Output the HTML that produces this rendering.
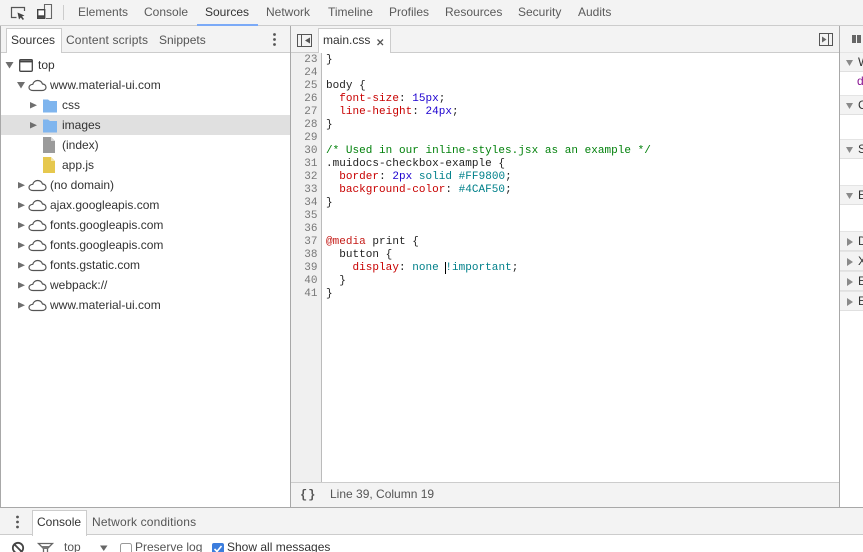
<!DOCTYPE html>
<html><head><meta charset="utf-8">
<style>
html,body{margin:0;padding:0;background:#fff}
#r{position:relative;width:863px;height:552px;overflow:hidden;background:#fff;font:12px/14px "Liberation Sans",sans-serif;color:#333;filter:blur(.3px)}
.a{position:absolute}
.t{position:absolute;white-space:nowrap;line-height:14px;color:#333}
.g{color:#555}
.tb{position:absolute;white-space:nowrap;line-height:14px;top:5px;color:#5a5a5a}
.n{position:absolute;left:291px;width:26.500px;text-align:right;font:11px/13px "Liberation Mono",monospace;color:#777}
.c{position:absolute;left:326px;white-space:pre;font:11px/13px "Liberation Mono",monospace;letter-spacing:.03px;color:#222}
.p{color:#c80000}.v{color:#1c00cf}.k{color:#00808a}.m{color:#00800a}.at{color:#c41a16}
svg{position:absolute;overflow:visible}
.hd{position:absolute;left:840px;width:23px;background:#f3f3f3;border-top:1px solid #e4e4e4;border-bottom:1px solid #e0e0e0}
.hd b{position:absolute;left:18px;top:0;font:normal 12px/19px "Liberation Sans",sans-serif;color:#333}
</style></head><body><div id="r">

<!-- top toolbar -->
<div class="a" style="left:0;top:0;width:863px;height:25px;background:#f3f3f3;border-bottom:1px solid #ccc"></div>
<svg style="left:0;top:0" width="70" height="25" fill="none">
<path d="M16.500 17.500H11.500V7.500H24.500V11" stroke="#555" stroke-width="1.200"/>
<path d="M17.500 12.500L24.500 15.500L22 16.500L24 19L22.800 20L20.800 17.500L19 19.500Z" fill="#444"/>
<path d="M44.500 9V4.500H51.500V18.500H46" stroke="#666" stroke-width="1.100"/>
<rect x="37.700" y="9.700" width="7" height="8.600" fill="#fff" stroke="#444" stroke-width="1.400"/>
<path d="M37.500 16.500H44.500" stroke="#444" stroke-width="2.400"/>
</svg>
<div class="a" style="left:63px;top:5px;width:1px;height:15px;background:#ccc"></div>
<div class="tb" style="left:78px">Elements</div>
<div class="tb" style="left:144px">Console</div>
<div class="tb" style="left:205px;color:#333">Sources</div>
<div class="tb" style="left:266px">Network</div>
<div class="tb" style="left:328px">Timeline</div>
<div class="tb" style="left:389px">Profiles</div>
<div class="tb" style="left:445px">Resources</div>
<div class="tb" style="left:518px">Security</div>
<div class="tb" style="left:578px">Audits</div>
<div class="a" style="left:197px;top:24px;width:61px;height:2px;background:#7baaf7"></div>

<!-- left pane -->
<div class="a" style="left:0;top:26px;width:1px;height:481px;background:#a8a8a8"></div>
<div class="a" style="left:1px;top:26px;width:289px;height:26px;background:#f3f3f3;border-bottom:1px solid #ccc"></div>
<div class="a" style="left:6px;top:28px;width:54px;height:24px;background:#fff;border:1px solid #ccc;border-bottom:none"></div>
<div class="t" style="left:11px;top:33px">Sources</div>
<div class="t g" style="left:66px;top:33px;letter-spacing:.14px">Content scripts</div>
<div class="t g" style="left:159px;top:33px">Snippets</div>
<svg style="left:270px;top:32px" width="8" height="16" fill="#555"><circle cx="4.500" cy="2.500" r="1.400"/><circle cx="4.500" cy="7.500" r="1.400"/><circle cx="4.500" cy="12.500" r="1.400"/></svg>
<div class="a" style="left:290px;top:26px;width:1px;height:481px;background:#a8a8a8"></div>

<div class="a" style="left:1px;top:115px;width:289px;height:20px;background:#e0e0e0"></div>

<svg style="left:0;top:53px" width="70" height="265">
<defs>
<path id="cl" d="M5.500 14.500H14.500C17 14.500 18.500 13 18.500 11.200C18.500 9.400 17 8 15 8C14.200 5.700 12.300 4.500 10.200 4.500C7.800 4.500 5.800 6.100 5.300 8.300C3.300 8.500 1.500 9.600 1.500 11.500C1.500 13.300 3.200 14.500 5.500 14.500Z" fill="none" stroke="#555" stroke-width="1.200"/>
<path id="tr" d="M0 0L7 3.250L0 6.500Z" fill="#6e6e6e"/>
<path id="td" d="M0 0H8L4 6.500Z" fill="#6e6e6e"/>
<path id="fo" d="M0 0H5L7 1.500H14V13H0Z" fill="#7fb5ee"/>
</defs>
<use href="#td" x="5.500" y="9"/>
<rect x="19.700" y="6.700" width="12.600" height="11.600" fill="none" stroke="#444" stroke-width="1.300" rx="1"/>
<path d="M19.500 8.500H32.500" stroke="#444" stroke-width="1.800"/>
<use href="#td" x="17" y="29"/>
<use href="#cl" x="27.500" y="23"/>
<use href="#tr" x="30" y="49"/>
<use href="#fo" x="43" y="46.500"/>
<use href="#tr" x="30" y="69"/>
<use href="#fo" x="43" y="66.500"/>
<path d="M43 84H51L55 88V100H43Z" fill="#9b9b9b"/><path d="M51 84V88H55Z" fill="#d6d6d6"/>
<path d="M43 104H51L55 108V120H43Z" fill="#e6c84e"/><path d="M51 104V108H55Z" fill="#f4e6a8"/>
<use href="#tr" x="18" y="129"/><use href="#cl" x="27.500" y="123"/>
<use href="#tr" x="18" y="149"/><use href="#cl" x="27.500" y="143"/>
<use href="#tr" x="18" y="169"/><use href="#cl" x="27.500" y="163"/>
<use href="#tr" x="18" y="189"/><use href="#cl" x="27.500" y="183"/>
<use href="#tr" x="18" y="209"/><use href="#cl" x="27.500" y="203"/>
<use href="#tr" x="18" y="229"/><use href="#cl" x="27.500" y="223"/>
<use href="#tr" x="18" y="249"/><use href="#cl" x="27.500" y="243"/>
</svg>

<div class="t" style="left:38px;top:58px">top</div>
<div class="t" style="left:50px;top:78px">www.material-ui.com</div>
<div class="t" style="left:62px;top:98px">css</div>
<div class="t" style="left:62px;top:118px">images</div>
<div class="t" style="left:62px;top:138px">(index)</div>
<div class="t" style="left:62px;top:158px">app.js</div>
<div class="t" style="left:50px;top:178px">(no domain)</div>
<div class="t" style="left:50px;top:198px">ajax.googleapis.com</div>
<div class="t" style="left:50px;top:218px">fonts.googleapis.com</div>
<div class="t" style="left:50px;top:238px">fonts.googleapis.com</div>
<div class="t" style="left:50px;top:258px">fonts.gstatic.com</div>
<div class="t" style="left:50px;top:278px">webpack://</div>
<div class="t" style="left:50px;top:298px">www.material-ui.com</div>

<!-- editor tabs -->
<div class="a" style="left:291px;top:26px;width:548px;height:26px;background:#f3f3f3;border-bottom:1px solid #ccc"></div>
<svg style="left:296px;top:33px" width="20" height="15" fill="none">
<rect x="1.500" y="1.500" width="14" height="12" stroke="#555"/><path d="M5.500 1.500V13.500" stroke="#555"/><path d="M14 4.500L9 7.500L14 10.500Z" fill="#555"/>
</svg>
<div class="a" style="left:318px;top:28px;width:71px;height:24px;background:#fff;border:1px solid #ccc;border-bottom:none"></div>
<div class="t" style="left:323px;top:33px">main.css</div>
<svg style="left:376px;top:38px" width="9" height="9"><path d="M1.500 1.500L7 7M7 1.500L1.500 7" stroke="#555" stroke-width="1.300"/></svg>
<svg style="left:818px;top:32px" width="16" height="15" fill="none">
<rect x="1.500" y="1.500" width="13" height="12" stroke="#555"/><path d="M10.500 1.500V13.500" stroke="#555"/><path d="M4 4.500L8.500 7.500L4 10.500Z" fill="#666"/>
</svg>

<!-- gutter -->
<div class="a" style="left:291px;top:53px;width:30px;height:430px;background:#f0f0f0;border-right:1px solid #bbb"></div>
<div id="nums">
<div class="n" style="top:54px">23</div><div class="n" style="top:67px">24</div><div class="n" style="top:80px">25</div><div class="n" style="top:93px">26</div><div class="n" style="top:106px">27</div><div class="n" style="top:119px">28</div><div class="n" style="top:132px">29</div><div class="n" style="top:145px">30</div><div class="n" style="top:158px">31</div><div class="n" style="top:171px">32</div><div class="n" style="top:184px">33</div><div class="n" style="top:197px">34</div><div class="n" style="top:210px">35</div><div class="n" style="top:223px">36</div><div class="n" style="top:236px">37</div><div class="n" style="top:249px">38</div><div class="n" style="top:262px">39</div><div class="n" style="top:275px">40</div><div class="n" style="top:288px">41</div>
</div>

<div class="c" style="top:54px">}</div>
<div class="c" style="top:80px">body {</div>
<div class="c" style="top:93px">  <span class="p">font-size</span>: <span class="v">15px</span>;</div>
<div class="c" style="top:106px">  <span class="p">line-height</span>: <span class="v">24px</span>;</div>
<div class="c" style="top:119px">}</div>
<div class="c m" style="top:145px;color:#00800a">/* Used in our inline-styles.jsx as an example */</div>
<div class="c" style="top:158px">.muidocs-checkbox-example {</div>
<div class="c" style="top:171px">  <span class="p">border</span>: <span class="v">2px</span> <span class="k">solid</span> <span class="k">#FF9800</span>;</div>
<div class="c" style="top:184px">  <span class="p">background-color</span>: <span class="k">#4CAF50</span>;</div>
<div class="c" style="top:197px">}</div>
<div class="c" style="top:236px"><span class="at">@media</span> print {</div>
<div class="c" style="top:249px">  button {</div>
<div class="c" style="top:262px">    <span class="p">display</span>: <span class="k">none</span> <span class="k">!important</span>;</div>
<div class="c" style="top:275px">  }</div>
<div class="c" style="top:288px">}</div>
<div class="a" style="left:445px;top:262px;width:1px;height:12px;background:#000"></div>

<!-- status bar -->
<div class="a" style="left:291px;top:482px;width:548px;height:24px;background:#f3f3f3;border-top:1px solid #ccc"></div>
<div class="t" style="left:300px;top:488px;font:bold 12px/14px 'Liberation Mono',monospace;letter-spacing:1px;color:#555">{}</div>
<div class="t g" style="left:330px;top:487px">Line 39, Column 19</div>

<!-- right sidebar -->
<div class="a" style="left:839px;top:26px;width:1px;height:481px;background:#a8a8a8"></div>
<div class="a" style="left:840px;top:26px;width:23px;height:26px;background:#f3f3f3;border-bottom:1px solid #ccc"></div>
<div class="a" style="left:852px;top:35px;width:3.500px;height:8px;background:#666"></div>
<div class="a" style="left:857px;top:35px;width:3.500px;height:8px;background:#666"></div>
<div class="hd" style="top:52px;height:18px"><b>W</b></div>
<div class="t" style="left:857px;top:74px;color:#881391">d</div>
<div class="hd" style="top:95px;height:18px"><b>C</b></div>
<div class="hd" style="top:139px;height:18px"><b>S</b></div>
<div class="hd" style="top:185px;height:18px"><b>E</b></div>
<div class="hd" style="top:231px;height:18px"><b>D</b></div>
<div class="hd" style="top:251px;height:18px"><b>X</b></div>
<div class="hd" style="top:271px;height:18px"><b>E</b></div>
<div class="hd" style="top:291px;height:18px"><b>E</b></div>
<svg style="left:840px;top:52px" width="23" height="260" fill="#8a8a8a">
<path d="M6 8H13L9.500 14Z"/><path d="M6 51H13L9.500 57Z"/><path d="M6 95H13L9.500 101Z"/><path d="M6 141H13L9.500 147Z"/>
<path d="M7 186L13 190L7 194Z"/><path d="M7 206L13 210L7 214Z"/><path d="M7 226L13 230L7 234Z"/><path d="M7 246L13 250L7 254Z"/>
</svg>

<!-- bottom drawer -->
<div class="a" style="left:0;top:507px;width:863px;height:1px;background:#a8a8a8"></div>
<div class="a" style="left:0;top:508px;width:863px;height:26px;background:#f3f3f3;border-bottom:1px solid #ccc"></div>
<svg style="left:13px;top:514px" width="8" height="16" fill="#555"><circle cx="4.500" cy="3" r="1.400"/><circle cx="4.500" cy="8" r="1.400"/><circle cx="4.500" cy="13" r="1.400"/></svg>
<div class="a" style="left:32px;top:510px;width:53px;height:25px;background:#fff;border:1px solid #ccc;border-bottom:none"></div>
<div class="t" style="left:37px;top:515px">Console</div>
<div class="t g" style="left:92px;top:515px;letter-spacing:.16px">Network conditions</div>
<svg style="left:0;top:536px" width="240" height="16" fill="none">
<circle cx="18" cy="12" r="5.200" stroke="#444" stroke-width="1.800"/><path d="M14.500 8.500L21.500 15.500" stroke="#444" stroke-width="1.800"/>
<path d="M38.500 7.500H52.500L47.500 12.500V17H43.500V12.500Z" stroke="#666" stroke-width="1.300"/><path d="M41 10H50L47 13H44Z" fill="#777"/>
<path d="M100 9.500H107.500L103.750 15Z" fill="#666"/>
<rect x="120.500" y="7.500" width="11" height="11" rx="2" fill="#fff" stroke="#999"/>
<rect x="212" y="7" width="12" height="12" rx="2" fill="#3b7ddd"/>
<path d="M214.500 13L217 15.500L221.500 10" stroke="#fff" stroke-width="1.600"/>
</svg>
<div class="t g" style="left:64px;top:540px">top</div>
<div class="t g" style="left:135px;top:540px">Preserve log</div>
<div class="t" style="left:227px;top:540px">Show all messages</div>

</div></body></html>
